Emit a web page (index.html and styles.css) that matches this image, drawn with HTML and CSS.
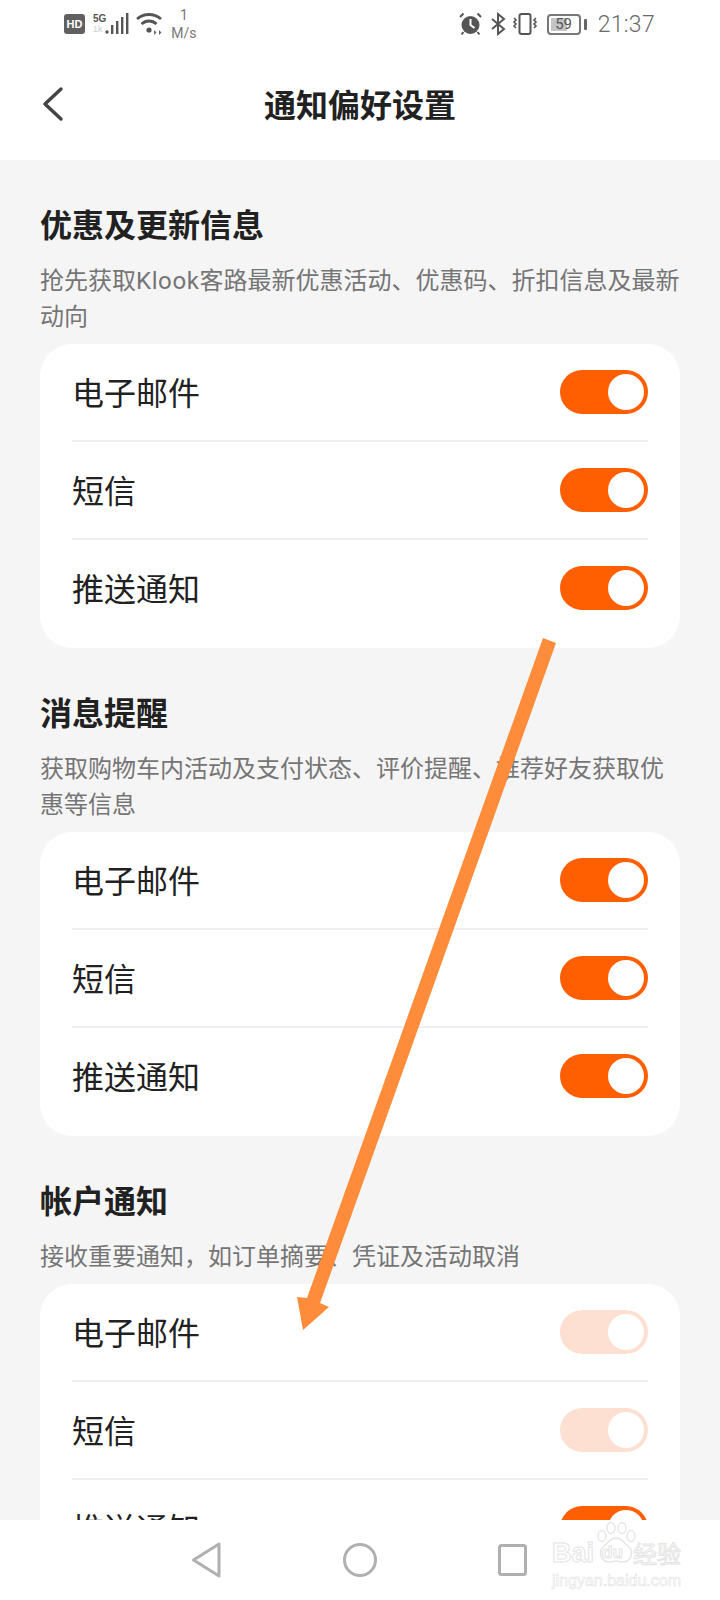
FILE: index.html
```html
<!DOCTYPE html>
<html lang="zh-CN">

<head>
  <meta charset="UTF-8">
  <meta name="viewport" content="width=device-width, initial-scale=1.0">
  <title>通知偏好设置</title>
  <link rel="stylesheet" href="styles.css">
</head>

<body>
  <div class="phone">
    <div class="statusBar">
      <div class="statusLeft">
        <span class="hdBadge">HD</span>
        <div class="netType">
          <span class="fiveG">5G</span>
          <span class="oneK">1k</span>
        </div>
        <svg class="signalIcon" width="24" height="24" viewBox="0 0 24 24">
          <circle cx="2" cy="20" r="1.700" fill="#555" />
          <rect x="6" y="13" width="2.400" height="9" fill="#555" />
          <rect x="11" y="9" width="2.400" height="13" fill="#555" />
          <rect x="16" y="5" width="2.400" height="17" fill="#555" />
          <rect x="21" y="1" width="2.400" height="21" fill="#555" />
        </svg>
        <svg class="wifiIcon" width="28" height="24" viewBox="0 0 28 24">
          <path d="M1 7C8 1 18 1 25 7" fill="none" stroke="#555" stroke-width="2.800" />
          <path d="M5.500 12C10 8 16 8 20.500 12" fill="none" stroke="#555" stroke-width="2.800" />
          <circle cx="13" cy="18" r="2.600" fill="#555" />
          <path d="M20.500 20.500l-2.500-2.500v5zM23 18v5l2.500-2.500z" fill="#666" />
        </svg>
        <div class="speed">
          <span>1</span>
          <span>M/s</span>
        </div>
      </div>
      <div class="statusRight">
        <svg class="alarmIcon" width="24" height="24" viewBox="0 0 24 24">
          <circle cx="11.500" cy="13" r="9" fill="#555" />
          <path d="M11.500 7v6l4 3" fill="none" stroke="#fff" stroke-width="2" />
          <path d="M1 5L4.500 1.500M22 5L18.500 1.500M4.500 20l-2 2.500M18.500 20l2 2.500" stroke="#555" stroke-width="2" />
        </svg>
        <svg width="16" height="24" viewBox="0 0 16 24">
          <path d="M2 7l12 10-6 5V2l6 5L2 17" fill="none" stroke="#555" stroke-width="2" />
        </svg>
        <svg width="28" height="24" viewBox="0 0 28 24">
          <rect x="8.500" y="2" width="11" height="20" rx="2" fill="none" stroke="#555" stroke-width="2" />
          <path d="M3 6l2 2-2 2 2 2-2 2 2 2M25 6l-2 2 2 2-2 2 2 2-2 2" fill="none" stroke="#555" stroke-width="1.600" />
        </svg>
        <div class="battery">
          <div class="batteryBody">
            <div class="batteryFill"></div>
            <span class="batteryText">59</span>
          </div>
          <div class="batteryCap"></div>
        </div>
        <span class="clock">21:37</span>
      </div>
    </div>

    <div class="header">
      <svg class="backIcon" width="24" height="36" viewBox="0 0 24 36">
        <path d="M20 3L4 18l16 15" fill="none" stroke="#444" stroke-width="3.500" stroke-linecap="round" stroke-linejoin="round" />
      </svg>
      <h1 class="pageTitle">通知偏好设置</h1>
    </div>

    <div class="content">
      <section class="group">
        <h2 class="groupTitle">优惠及更新信息</h2>
        <p class="groupDesc">抢先获取<span class="brand">Klook</span>客路最新优惠活动、优惠码、折扣信息及最新动向</p>
        <div class="card">
          <div class="row"><span class="rowLabel">电子邮件</span><span class="toggle"></span></div>
          <div class="row"><span class="rowLabel">短信</span><span class="toggle"></span></div>
          <div class="row"><span class="rowLabel">推送通知</span><span class="toggle"></span></div>
        </div>
      </section>

      <section class="group">
        <h2 class="groupTitle">消息提醒</h2>
        <p class="groupDesc">获取购物车内活动及支付状态、评价提醒、推荐好友获取优惠等信息</p>
        <div class="card">
          <div class="row"><span class="rowLabel">电子邮件</span><span class="toggle"></span></div>
          <div class="row"><span class="rowLabel">短信</span><span class="toggle"></span></div>
          <div class="row"><span class="rowLabel">推送通知</span><span class="toggle"></span></div>
        </div>
      </section>

      <section class="group">
        <h2 class="groupTitle">帐户通知</h2>
        <p class="groupDesc">接收重要通知，如订单摘要、凭证及活动取消</p>
        <div class="card">
          <div class="row"><span class="rowLabel">电子邮件</span><span class="toggle disabled"></span></div>
          <div class="row"><span class="rowLabel">短信</span><span class="toggle disabled"></span></div>
          <div class="row"><span class="rowLabel">推送通知</span><span class="toggle"></span></div>
        </div>
      </section>
    </div>

    <div class="navBar">
      <svg width="30" height="36" viewBox="0 0 30 36">
        <path d="M27 2V34L1.500 18z" fill="none" stroke="#b0b0b0" stroke-width="3" stroke-linejoin="round" />
      </svg>
      <svg width="34" height="34" viewBox="0 0 34 34">
        <circle cx="17" cy="17" r="15.500" fill="none" stroke="#b0b0b0" stroke-width="3" />
      </svg>
      <svg width="30" height="32" viewBox="0 0 30 32">
        <rect x="1.500" y="1.500" width="26" height="29" rx="2" fill="none" stroke="#b0b0b0" stroke-width="3" />
      </svg>
    </div>

    <!-- annotation drawn on top of the screenshot -->
    <svg class="arrow" width="720" height="1600" viewBox="0 0 720 1600">
      <polygon points="543,638 556,643 320,1303 329,1307 303,1330 297,1297 307,1298" fill="#ff8c3a" />
    </svg>

    <div class="watermark">
      <svg class="paw" width="42" height="42" viewBox="0 0 42 42">
        <g fill="#fff" stroke="#e6e6e6" stroke-width="1.500">
          <ellipse cx="7" cy="14" rx="4" ry="5.500" />
          <ellipse cx="16" cy="6" rx="4" ry="5.500" />
          <ellipse cx="27" cy="6" rx="4" ry="5.500" />
          <ellipse cx="36" cy="14" rx="4" ry="5.500" />
          <path d="M21 16c-6 0-8 5-13 9-5 5-2 15 6 15 3 0 5-1 7-1s4 1 7 1c8 0 11-10 6-15-5-4-7-9-13-9z" />
        </g>
      </svg>
      <div class="markTop">
        <span class="markLatin">Bai</span>
        <span class="markDu">du</span>
        <span class="markCn">经验</span>
      </div>
      <div class="markUrl">jingyan.baidu.com</div>
    </div>
  </div>
</body>

</html>
```

FILE: styles.css
```css
* {
  box-sizing: border-box;
}

body {
  margin: 0;
  font-family: "Roboto", "Noto Sans CJK SC", sans-serif;
}

.phone {
  position: relative;
  display: flex;
  flex-direction: column;
  width: 720px;
  height: 1600px;
  overflow: hidden;
  background-color: #f5f5f5;
}

/* status bar */
.statusBar {
  display: flex;
  justify-content: space-between;
  align-items: center;
  flex-shrink: 0;
  height: 48px;
  padding: 0 65px 0 64px;
  background-color: #fff;
}

.statusLeft,
.statusRight {
  display: flex;
  align-items: center;
}

.statusRight {
  gap: 5px;
}

.alarmIcon {
  margin-right: 2px;
}

.hdBadge {
  width: 21px;
  height: 20px;
  border-radius: 3px;
  background-color: #606060;
  color: #fff;
  font-family: "Liberation Sans", sans-serif;
  font-size: 11px;
  font-weight: 700;
  line-height: 20px;
  text-align: center;
}

.netType {
  display: flex;
  flex-direction: column;
  margin-left: 8px;
  font-family: "Liberation Sans", sans-serif;
  line-height: 11px;
}

.fiveG {
  color: #555;
  font-size: 10px;
  font-weight: 700;
}

.oneK {
  color: #ccc;
  font-size: 9px;
}

.signalIcon {
  margin-left: -1px;
}

.wifiIcon {
  margin-left: 7px;
}

.speed {
  display: flex;
  flex-direction: column;
  align-items: center;
  margin-left: 7px;
  color: #777;
  font-size: 14px;
  line-height: 18px;
}

.battery {
  display: flex;
  align-items: center;
  margin-left: 3px;
}

.batteryBody {
  position: relative;
  width: 34px;
  height: 21px;
  padding: 2px;
  border: 2px solid #777;
  border-radius: 4px;
}

.batteryFill {
  width: 62%;
  height: 100%;
  background-color: #c4c4c4;
}

.batteryText {
  position: absolute;
  top: 0;
  left: 0;
  width: 100%;
  color: #555;
  font-size: 15px;
  line-height: 17px;
  text-align: center;
}

.batteryCap {
  width: 3px;
  height: 11px;
  margin-left: 3px;
  border-radius: 1px;
  background-color: #666;
}

.clock {
  margin-left: 6px;
  color: #6a6a6a;
  font-size: 23px;
  font-weight: 300;
  letter-spacing: 0.3px;
}

/* page header */
.header {
  position: relative;
  display: flex;
  justify-content: center;
  align-items: center;
  flex-shrink: 0;
  height: 112px;
  background-color: #fff;
}

.backIcon {
  position: absolute;
  top: 38px;
  left: 41px;
}

.pageTitle {
  margin: 4px 0 0;
  color: #212121;
  font-size: 32px;
  font-weight: 700;
  line-height: 44px;
}

/* settings groups */
.content {
  flex: 1;
  min-height: 0;
  overflow: hidden;
  padding: 44px 40px 0;
}

.group {
  margin-bottom: 44px;
}

.groupTitle {
  margin: 0 0 15px;
  color: #212121;
  font-size: 32px;
  font-weight: 700;
  line-height: 44px;
}

.groupDesc {
  margin: 0 0 9px;
  color: #757575;
  font-size: 24px;
  line-height: 36px;
}

.brand {
  letter-spacing: 0.6px;
}

.card {
  padding: 0 32px 12px;
  border-radius: 32px;
  background-color: #fff;
}

.row {
  display: flex;
  justify-content: space-between;
  align-items: center;
  height: 98px;
  border-bottom: 2px solid #eee;
}

.row:last-child {
  height: 96px;
  border-bottom: none;
}

.rowLabel {
  margin-bottom: 2px;
  color: #212121;
  font-size: 32px;
}

.toggle {
  position: relative;
  width: 88px;
  height: 44px;
  border-radius: 22px;
  background-color: #ff5f00;
}

.toggle::after {
  content: "";
  position: absolute;
  top: 4px;
  right: 4px;
  width: 36px;
  height: 36px;
  border-radius: 50%;
  background-color: #fff;
}

.toggle.disabled {
  background-color: #fde0d2;
}

/* bottom navigation */
.navBar {
  display: flex;
  justify-content: center;
  align-items: center;
  gap: 121px;
  flex-shrink: 0;
  height: 80px;
  background-color: #fff;
}

/* overlays */
.arrow {
  position: absolute;
  top: 0;
  left: 0;
  pointer-events: none;
}

.watermark {
  position: absolute;
  top: 1535px;
  left: 552px;
  width: 130px;
  font-family: "Liberation Sans", sans-serif;
  color: transparent;
  -webkit-text-stroke: 1px #e4e4e4;
}

.paw {
  position: absolute;
  top: -13px;
  left: 43px;
}

.markTop {
  position: relative;
  display: flex;
  align-items: center;
  height: 36px;
}

.markLatin {
  width: 50px;
  font-size: 27px;
  font-weight: 700;
}

.markDu {
  width: 31px;
  font-size: 17px;
  font-weight: 700;
}

.markCn {
  font-family: "Noto Sans CJK SC", sans-serif;
  font-size: 24px;
  line-height: 30px;
}

.markUrl {
  font-size: 16px;
  line-height: 20px;
  white-space: nowrap;
  -webkit-text-stroke: 0.6px #e4e4e4;
}
```
